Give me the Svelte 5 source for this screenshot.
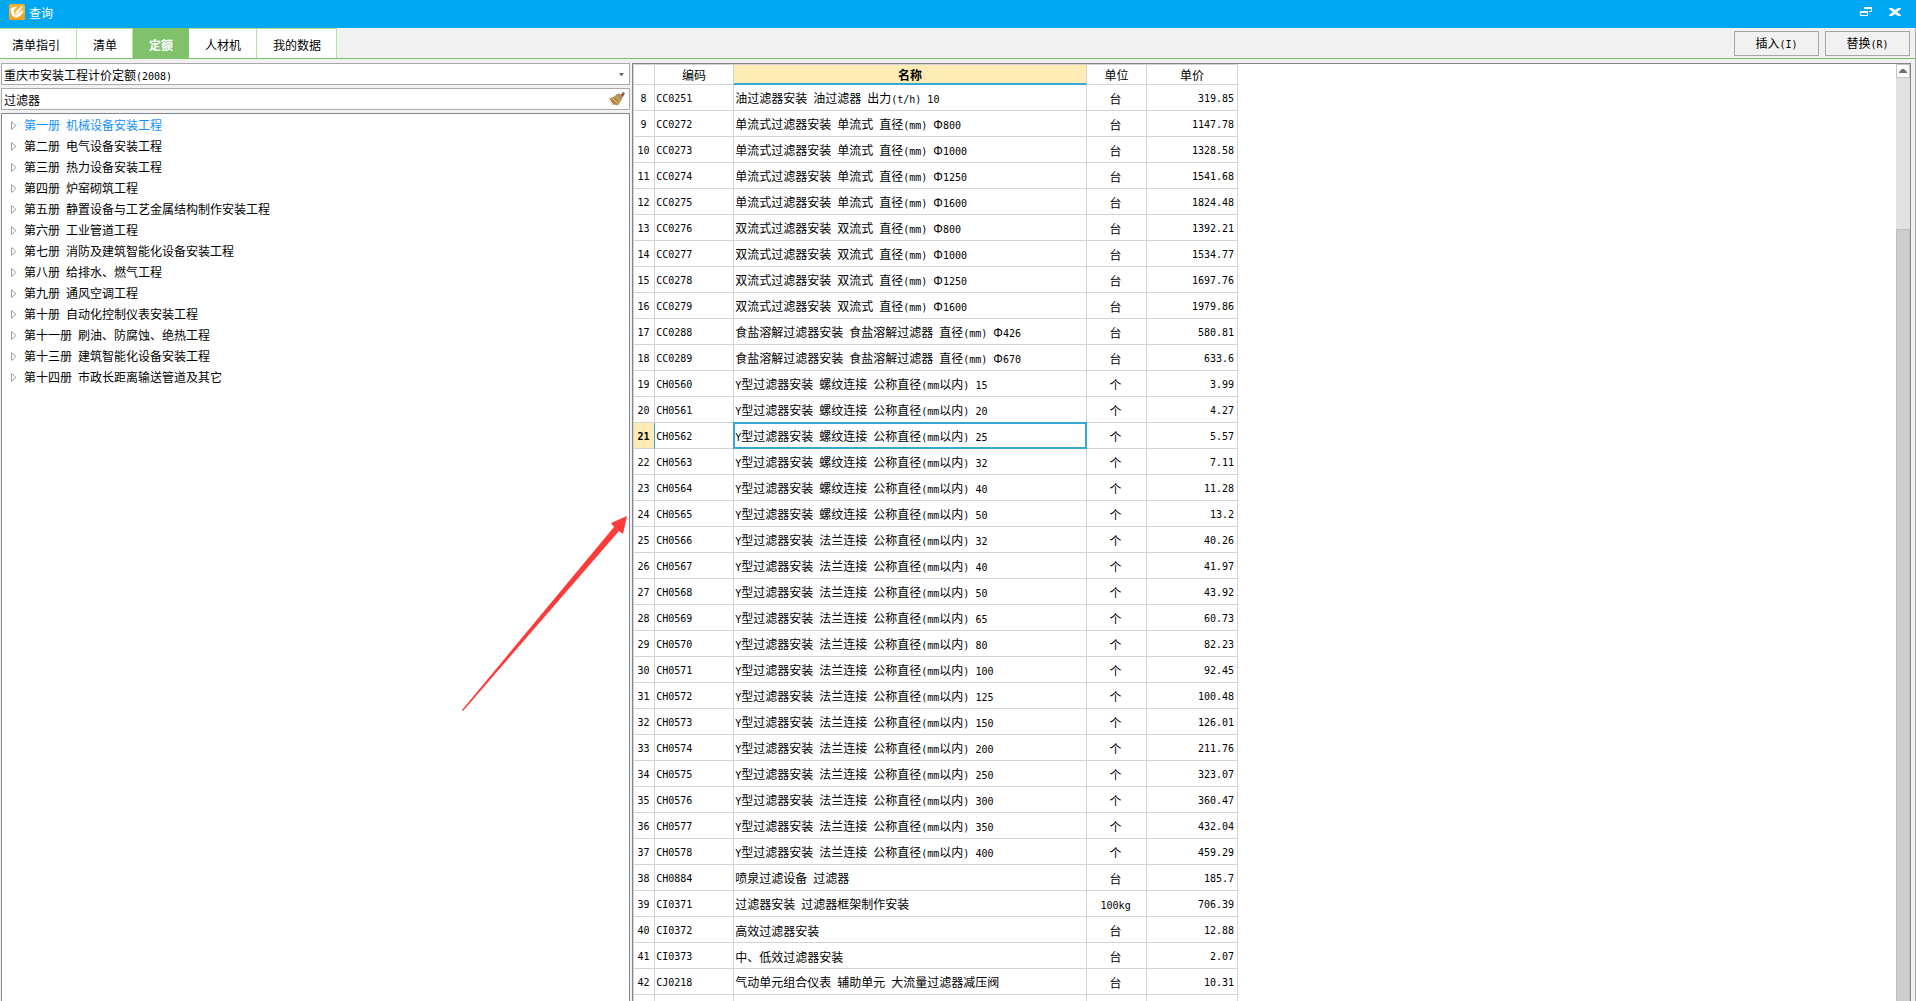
<script>
  const tabs = ['清单指引', '清单', '定额', '人材机', '我的数据'];
  let activeTab = $state('定额');
  let keyword = $state('过滤器');
  let selected = $state(21);

  const books = [
    '第一册 机械设备安装工程',
    '第二册 电气设备安装工程',
    '第三册 热力设备安装工程',
    '第四册 炉窑砌筑工程',
    '第五册 静置设备与工艺金属结构制作安装工程',
    '第六册 工业管道工程',
    '第七册 消防及建筑智能化设备安装工程',
    '第八册 给排水、燃气工程',
    '第九册 通风空调工程',
    '第十册 自动化控制仪表安装工程',
    '第十一册 刷油、防腐蚀、绝热工程',
    '第十三册 建筑智能化设备安装工程',
    '第十四册 市政长距离输送管道及其它'
  ];
  let activeBook = $state(0);

  const rows = [
    ['CC0251', '油过滤器安装 油过滤器 出力(t/h) 10', '台', '319.85'],
    ['CC0272', '单流式过滤器安装 单流式 直径(mm) Φ800', '台', '1147.78'],
    ['CC0273', '单流式过滤器安装 单流式 直径(mm) Φ1000', '台', '1328.58'],
    ['CC0274', '单流式过滤器安装 单流式 直径(mm) Φ1250', '台', '1541.68'],
    ['CC0275', '单流式过滤器安装 单流式 直径(mm) Φ1600', '台', '1824.48'],
    ['CC0276', '双流式过滤器安装 双流式 直径(mm) Φ800', '台', '1392.21'],
    ['CC0277', '双流式过滤器安装 双流式 直径(mm) Φ1000', '台', '1534.77'],
    ['CC0278', '双流式过滤器安装 双流式 直径(mm) Φ1250', '台', '1697.76'],
    ['CC0279', '双流式过滤器安装 双流式 直径(mm) Φ1600', '台', '1979.86'],
    ['CC0288', '食盐溶解过滤器安装 食盐溶解过滤器 直径(mm) Φ426', '台', '580.81'],
    ['CC0289', '食盐溶解过滤器安装 食盐溶解过滤器 直径(mm) Φ670', '台', '633.6'],
    ['CH0560', 'Y型过滤器安装 螺纹连接 公称直径(mm以内) 15', '个', '3.99'],
    ['CH0561', 'Y型过滤器安装 螺纹连接 公称直径(mm以内) 20', '个', '4.27'],
    ['CH0562', 'Y型过滤器安装 螺纹连接 公称直径(mm以内) 25', '个', '5.57'],
    ['CH0563', 'Y型过滤器安装 螺纹连接 公称直径(mm以内) 32', '个', '7.11'],
    ['CH0564', 'Y型过滤器安装 螺纹连接 公称直径(mm以内) 40', '个', '11.28'],
    ['CH0565', 'Y型过滤器安装 螺纹连接 公称直径(mm以内) 50', '个', '13.2'],
    ['CH0566', 'Y型过滤器安装 法兰连接 公称直径(mm以内) 32', '个', '40.26'],
    ['CH0567', 'Y型过滤器安装 法兰连接 公称直径(mm以内) 40', '个', '41.97'],
    ['CH0568', 'Y型过滤器安装 法兰连接 公称直径(mm以内) 50', '个', '43.92'],
    ['CH0569', 'Y型过滤器安装 法兰连接 公称直径(mm以内) 65', '个', '60.73'],
    ['CH0570', 'Y型过滤器安装 法兰连接 公称直径(mm以内) 80', '个', '82.23'],
    ['CH0571', 'Y型过滤器安装 法兰连接 公称直径(mm以内) 100', '个', '92.45'],
    ['CH0572', 'Y型过滤器安装 法兰连接 公称直径(mm以内) 125', '个', '100.48'],
    ['CH0573', 'Y型过滤器安装 法兰连接 公称直径(mm以内) 150', '个', '126.01'],
    ['CH0574', 'Y型过滤器安装 法兰连接 公称直径(mm以内) 200', '个', '211.76'],
    ['CH0575', 'Y型过滤器安装 法兰连接 公称直径(mm以内) 250', '个', '323.07'],
    ['CH0576', 'Y型过滤器安装 法兰连接 公称直径(mm以内) 300', '个', '360.47'],
    ['CH0577', 'Y型过滤器安装 法兰连接 公称直径(mm以内) 350', '个', '432.04'],
    ['CH0578', 'Y型过滤器安装 法兰连接 公称直径(mm以内) 400', '个', '459.29'],
    ['CH0884', '喷泉过滤设备 过滤器', '台', '185.7'],
    ['CI0371', '过滤器安装 过滤器框架制作安装', '100kg', '706.39'],
    ['CI0372', '高效过滤器安装', '台', '12.88'],
    ['CI0373', '中、低效过滤器安装', '台', '2.07'],
    ['CJ0218', '气动单元组合仪表 辅助单元 大流量过滤器减压阀', '台', '10.31']
  ].map(([code, name, unit, price], i) => ({ no: i + 8, code, name, unit, price }));

  // Latin runs are set in a half-width face, so two of them span one Han character.
  const runs = (text) => text.match(/[\x20-\x7e]+|Φ|[^\x20-\x7eΦ]+/g) ?? [];
  const kind = (run) => (run === 'Φ' ? 'greek' : /^[\x20-\x7e]/.test(run) ? 'latin' : 'han');
</script>

{#snippet mixed(text)}{#each runs(text) as run}<span class={kind(run)}>{run}</span>{/each}{/snippet}

<div class="window">
  <header class="titlebar">
    <svg class="logo" viewBox="0 0 16 16" aria-hidden="true">
      <rect width="16" height="16" rx="2" fill="#fbb02a" />
      <path d="M0 10h16v4a2 2 0 0 1-2 2H2a2 2 0 0 1-2-2z" fill="#f9a11f" />
      <path d="M1.500 5C3 3.500 5 2.500 8 2.500L5.500 5.500 4.500 8l2.500 1.500 2-1L14.500 6C14 10 11 13 7 13.500 3.500 13.500 2 10 1.500 5z" fill="#fff" />
      <path d="M6 8.500L12 1.500l2.500 1.500-6 6.500-3 1z" fill="#fff" stroke="#fbb02a" stroke-width=".8" />
    </svg>
    <h1>查询</h1>
    <button class="sys" aria-label="还原">
      <svg width="12" height="10" viewBox="0 0 12 10"><path d="M4 0h8v5h-3v-1h2v-2h-7z M0 4h8v5h-8z M1 6v2h6v-2z" fill="#fff" fill-rule="evenodd" /></svg>
    </button>
    <button class="sys" aria-label="关闭">
      <svg width="12" height="10" viewBox="0 0 12 10"><path d="M0 1h3l3 2 3-2h3v1L8 5l4 3v1H9L6 7 3 9H0V8l4-3-4-3z" fill="#fff" /></svg>
    </button>
  </header>

  <div class="toolbar">
    <nav class="tabs">
      {#each tabs as tab}
        <button class="tab" class:active={tab === activeTab} onclick={() => (activeTab = tab)}>{tab}</button>
      {/each}
    </nav>
    <div class="actions">
      <button class="action">{@render mixed('插入(I)')}</button>
      <button class="action">{@render mixed('替换(R)')}</button>
    </div>
  </div>

  <main class="body">
    <aside class="side">
      <div class="field">
        <select aria-label="定额库">
          <button><span>{@render mixed('重庆市安装工程计价定额(2008)')}</span></button>
          <option>重庆市安装工程计价定额(2008)</option>
        </select>
        <svg class="caret" width="5" height="3" viewBox="0 0 5 3" aria-hidden="true"><path d="M0 0h5L3 3H2z" fill="#6b7078" /></svg>
      </div>
      <div class="field">
        <input type="text" aria-label="搜索" bind:value={keyword} />
        <button class="clear" aria-label="清除" onclick={() => (keyword = '')}>
          <svg width="16" height="14" viewBox="0 0 16 14">
            <ellipse cx="6" cy="12" rx="5" ry="1" fill="#ddd" />
            <path d="M11 3.500L14 0l2 1-2 4z" fill="#a3583a" />
            <path d="M0 6.500C3 6 6 4 8 2l5.500 4c-1 2.500-3 5-5 7.500C5 13 2 10 0 6.500z" fill="#c79a58" />
            <path d="M2.500 6.500l5.500 6M5 5.500l4.500 5.500M2 9l4 3.500" stroke="#9b6d30" fill="none" />
            <path d="M3.500 6.500l5 5" stroke="#e8c68c" fill="none" />
            <path d="M7.500 2.500l5 4.500" stroke="#8d93a6" stroke-width="1.500" fill="none" />
            <path d="M9 2l4.500 3.500" stroke="#b98a4c" stroke-width="2" fill="none" />
          </svg>
        </button>
      </div>
      <ul class="tree">
        {#each books as book, i}
          <li>
            <button class="node" class:current={i === activeBook} onclick={() => (activeBook = i)}>
              <svg width="6" height="9" viewBox="0 0 6 9" aria-hidden="true"><path d="M.5 .5v8l4.500-4z" fill="none" stroke="#a0a0a0" /></svg>
              <span>{@render mixed(book)}</span>
            </button>
          </li>
        {/each}
      </ul>
    </aside>

    <section class="grid">
      <div class="scroll">
        <table>
          <colgroup>
            <col class="c-no" /><col class="c-code" /><col class="c-name" /><col class="c-unit" /><col class="c-price" />
          </colgroup>
          <thead>
            <tr><th></th><th>编码</th><th class="sorted">名称</th><th>单位</th><th>单价</th></tr>
          </thead>
          <tbody>
            {#each rows as row (row.no)}
              <tr class:selected={row.no === selected} onclick={() => (selected = row.no)}>
                <th scope="row" class="no latin">{row.no}</th>
                <td class="latin">{row.code}</td>
                <td class="name">{@render mixed(row.name)}</td>
                <td class="unit">{@render mixed(row.unit)}</td>
                <td class="price latin">{row.price}</td>
              </tr>
            {/each}
            <tr><th></th><td></td><td></td><td></td><td></td></tr>
          </tbody>
        </table>
      </div>
      <div class="scrollbar">
        <button class="up" aria-label="向上滚动">
          <svg width="8" height="4" viewBox="0 0 8 4"><path d="M0 4V3l3-3h2l3 3v1z" fill="#6b6f7b" /></svg>
        </button>
        <div class="track"></div>
        <div class="thumb"></div>
      </div>
    </section>
  </main>

  <svg class="pointer" width="167" height="196" viewBox="0 0 167 196" aria-hidden="true">
    <path d="M0 194L152 11l-3-4 16-7-4 18-4-3L1 195z" fill="#fd3b38" />
  </svg>
</div>

<style>
  :global(body) { margin: 0; }
  .window, .window button, .window input, .window select {
    font-family: "Noto Sans CJK SC", sans-serif;
    font-size: 12px;
    line-height: 18px;
    color: #000;
  }
  .window {
    position: relative;
    box-sizing: border-box;
    height: 100vh;
    display: flex;
    flex-direction: column;
    overflow: hidden;
    background: #f1f1f1;
  }
  button { border: 0; padding: 0; background: none; }
  .window .latin { font-family: "DejaVu Sans Mono", monospace; font-size: 10px; white-space: pre; }
  .greek { font-family: "Liberation Sans", sans-serif; }

  .titlebar {
    flex: none;
    display: flex;
    align-items: center;
    height: 28px;
    padding: 0 15px 4px 9px;
    box-sizing: border-box;
    background: #00a8f3;
  }
  .logo { width: 16px; height: 16px; }
  .titlebar h1 { flex: 1; margin: 0 0 0 4px; padding-top: 1px; font-size: 12px; font-weight: 400; color: #fff; }
  .sys { width: 12px; height: 12px; margin-left: 17px; display: flex; align-items: center; justify-content: center; }

  .toolbar {
    flex: none;
    display: flex;
    justify-content: space-between;
    height: 31px;
    box-sizing: border-box;
    border-bottom: 1px solid #7bc36a;
    border-right: 1px solid #aaa;
  }
  .tabs { display: flex; }
  .window .tab {
    padding: 2px 15px 0 16px;
    background: #fff;
    border-top: 1px solid #b5e3a4;
    border-right: 1px solid #b5e3a4;
  }
  .window .tab:first-child { padding: 2px 16px 0 12px; }
  .window .tab.active { background: #7fc26b; border-color: #7fc26b; color: #fff; font-weight: 700; }
  .actions { display: flex; gap: 6px; padding: 3px 5px 2px 0; }
  .action { width: 85px; border: 1px solid #a6a6a6; }

  .body {
    flex: 1;
    min-height: 0;
    display: grid;
    grid-template-columns: minmax(0, 38fr) minmax(0, 77fr);
    padding: 4px 4px 0 1px;
    border-right: 1px solid #aaa;
  }
  .side { display: flex; flex-direction: column; margin-right: 2px; min-height: 0; }
  .field {
    flex: none;
    display: flex;
    align-items: center;
    height: 20px;
    margin-bottom: 3px;
    border: 1px solid #a9a9a9;
    background: #fff;
  }
  .field select {
    appearance: base-select;
    flex: 1;
    height: 20px;
    min-height: 0;
    padding: 2px 2px 0;
    border: 0;
    border-radius: 0;
    background: #fff;
  }
  .field select::picker-icon { display: none; }
  .field input { flex: 1; height: 20px; padding: 0 2px; border: 0; outline: 0; box-sizing: border-box; }
  .caret { margin-right: 5px; }
  .clear { width: 16px; height: 14px; margin-right: 4px; display: flex; }
  .tree {
    flex: 1;
    min-height: 0;
    margin: 0;
    padding: 1px 0 0;
    list-style: none;
    background: #fff;
    border: 1px solid #82878f;
    border-bottom: 0;
  }
  .node { display: flex; align-items: center; gap: 7px; height: 21px; padding-left: 9px; white-space: nowrap; }
  .window .node.current { color: #1390ff; }

  .grid { display: flex; background: #fff; border: 1px solid #82878f; border-bottom: 0; min-height: 0; }
  .scroll { flex: 1; overflow: hidden; }
  table {
    width: 605px;
    table-layout: fixed;
    border-collapse: separate;
    border-spacing: 0;
    border-top: 1px solid #d3d3d3;
    border-left: 1px solid #d3d3d3;
  }
  .c-no { width: 21px; }
  .c-code { width: 79px; }
  .c-name { width: 353px; }
  .c-unit { width: 60px; }
  .c-price { width: 91px; }
  th, td {
    box-sizing: border-box;
    height: 26px;
    padding: 2px 3px 0 1px;
    border-right: 1px solid #d3d3d3;
    border-bottom: 1px solid #d3d3d3;
    font-weight: 400;
    white-space: nowrap;
    line-height: 18px;
    text-align: left;
  }
  thead th { height: 20px; padding: 0; text-align: center; }
  thead th.sorted { background: #ffecb4; border-bottom: 2px solid #36a6d2; line-height: 17px; font-weight: 700; }
  th.no { padding: 2px 1px 0 0; text-align: center; }
  td.name { position: relative; }
  td.unit { text-align: center; }
  td.price { text-align: right; }
  .selected th.no { background: #ffecb4; border-right-color: #36a6d2; font-weight: 700; }
  /* The cell cursor lies over the grid lines on all four sides. */
  .selected td.name::after {
    content: "";
    position: absolute;
    inset: -1px;
    border: 2px solid #36a6d2;
    pointer-events: none;
  }

  .scrollbar { flex: none; width: 14px; display: flex; flex-direction: column; background: #e1e1e1; }
  .up {
    flex: none;
    height: 14px;
    display: flex;
    align-items: center;
    justify-content: center;
    border: 1px solid #c5c5c5;
    background: #fff;
  }
  .track { flex: 151; }
  .thumb { flex: 772; background: #cdcdcd; border: 1px solid #bfbfbf; border-bottom: 0; }

  .pointer { position: absolute; left: 462px; top: 516px; pointer-events: none; }
</style>
